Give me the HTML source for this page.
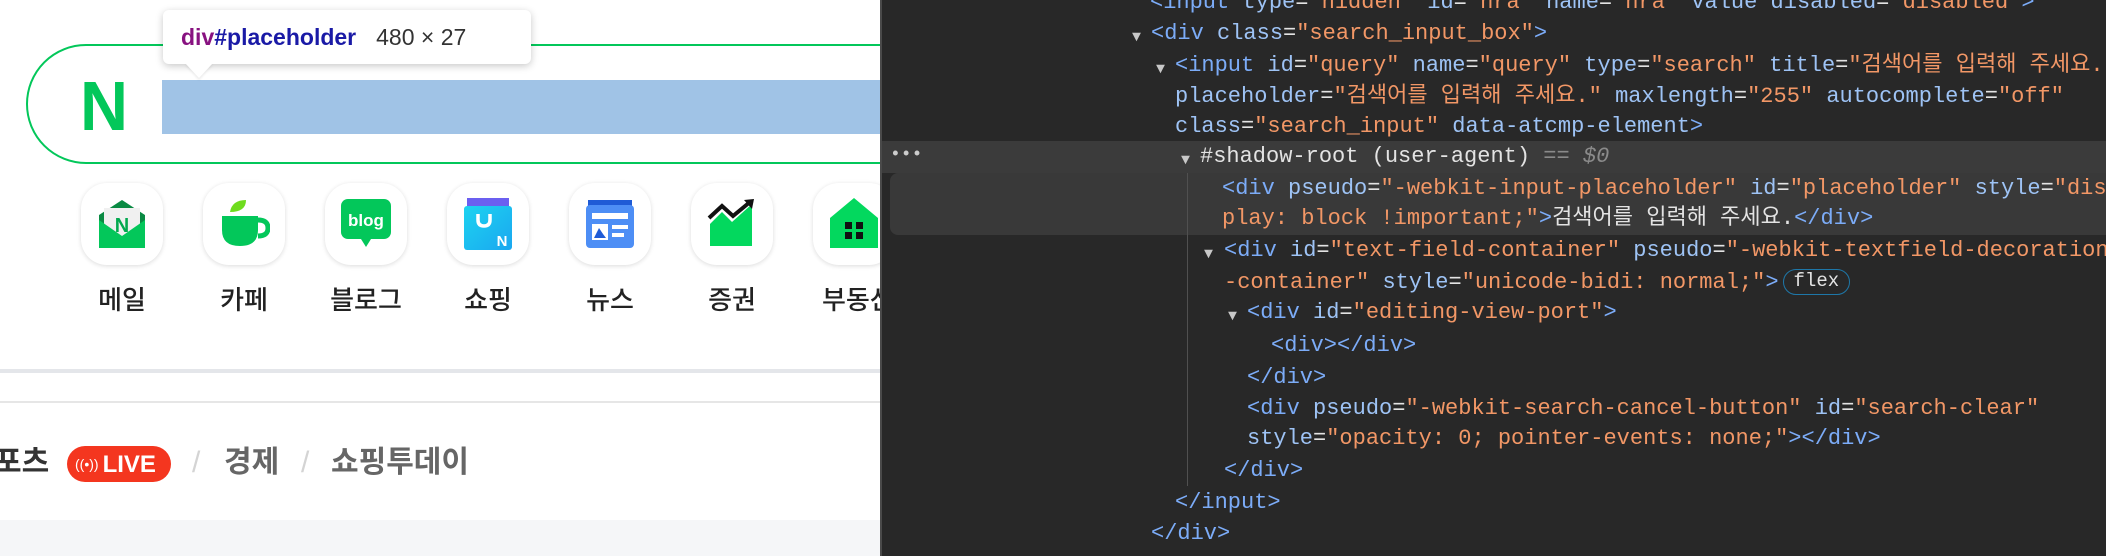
<!DOCTYPE html>
<html><head><meta charset="utf-8"><style>
*{margin:0;padding:0;box-sizing:border-box}
body{width:2106px;height:556px;overflow:hidden;background:#fff;position:relative;font-family:"Liberation Sans","Noto Sans CJK KR",sans-serif}
#left{position:absolute;left:0;top:0;width:880px;height:556px;overflow:hidden;background:#fff}
.sbox{position:absolute;left:26px;top:44px;width:1000px;height:120px;border:2.5px solid #03c75a;border-radius:62px}
.hl{position:absolute;left:162px;top:80px;width:720px;height:54px;background:#a0c3e6}
.nlogo{position:absolute;left:80px;top:64px;font:bold 70px "Liberation Sans",sans-serif;color:#03c75a;line-height:84px;transform:scaleX(0.95);transform-origin:left}
.tip{position:absolute;left:163px;top:10px;width:368px;height:54px;background:#fff;border-radius:6px;box-shadow:0 2px 8px rgba(0,0,0,.22);font-size:23px;line-height:54px;padding-left:18px;white-space:nowrap}
.tip b{color:#881280}.tip b i{font-style:normal;color:#1a1aa6}
.tip span{color:#333;margin-left:20px;font-size:23px}
.arrow{position:absolute;left:185px;top:63px;width:0;height:0;border-left:14px solid transparent;border-right:14px solid transparent;border-top:15px solid #fff;filter:drop-shadow(0 2px 1px rgba(0,0,0,.08))}
.ic{position:absolute;top:183px;width:82px;height:82px;border-radius:26px;background:#fff;box-shadow:0 1px 5px rgba(0,0,0,.14);display:flex;align-items:center;justify-content:center}
.lb{position:absolute;top:280px;width:120px;text-align:center;font-size:26px;color:#222;font-weight:500}
.line1{position:absolute;left:0;top:369px;width:880px;height:4px;background:#e4e6ea}
.line2{position:absolute;left:0;top:401px;width:880px;height:2px;background:#e6e6e6}
.row{position:absolute;top:443px;font-size:30px;font-weight:bold;color:#555;white-space:nowrap;line-height:40px}
.live{position:absolute;left:67px;top:446px;width:104px;height:36px;border-radius:18px;background:#f4361f;color:#fff;font:bold 24px "Liberation Sans",sans-serif;line-height:36px;padding-left:8px;white-space:nowrap}
.live small{font-size:14px;font-weight:normal;vertical-align:3px;margin-right:4px}
.sep{position:absolute;top:446px;font-size:30px;color:#d4d4d4;font-weight:300}
.gray{position:absolute;left:0;top:520px;width:880px;height:36px;background:#f5f6f8}
#dev{position:absolute;left:880px;top:0;width:1226px;height:556px;background:#282828;border-left:2px solid #4a4a4a;overflow:hidden;font:22px/31.2px "Liberation Mono","Noto Sans CJK KR",monospace;color:#e3e3e3}
.l{position:absolute;white-space:pre;height:31.2px}
.t{color:#7cacf8}.a{color:#9ec3f5}.v{color:#f29766}.g{color:#8a8a8a}
.tri{position:absolute;color:#c8c8c8;font-size:15px}
.sel{position:absolute;left:0;top:141px;width:1226px;height:32px;background:#3b3b3b}
.hov{position:absolute;left:8px;top:173px;width:1230px;height:62px;background:#393939;border-radius:8px}
.guide{position:absolute;left:305px;top:173px;width:1px;height:313px;background:#505050}
.flex{display:inline-block;border:1.5px solid #1e77a8;border-radius:14px;height:26px;line-height:22px;padding:0 10px;font-size:19px;color:#e3e3e3;vertical-align:middle;margin-left:4px}
</style></head><body>
<div id="left">
<div class="sbox"></div>
<div class="hl"></div>
<div class="nlogo">N</div>
<div class="tip"><b>div<i>#placeholder</i></b><span>480 × 27</span></div>
<div class="arrow"></div>

<div class="ic" style="left:81px"><svg width="52" height="52" viewBox="0 0 52 52"><path d="M3 17 L26 2 L49 17 V50 H3Z" fill="#0a8a43"/><rect x="8" y="10" width="36" height="30" fill="#f0f0f0"/><text x="26" y="34" font-family="Liberation Sans" font-weight="bold" font-size="20" fill="#03a94f" text-anchor="middle">N</text><path d="M3 22 L26 38 L49 22 V50 H3Z" fill="#03c75a"/></svg></div>
<div class="ic" style="left:203px"><svg width="52" height="52" viewBox="0 0 52 52"><path d="M12 14 Q14 2 28 2 Q28 14 12 14Z" fill="#6fdc1e"/><path d="M4 18 H40 V32 Q40 48 22 48 Q4 48 4 32Z" fill="#03c75a"/><path d="M40 22 Q50 22 50 30 Q50 38 40 38" fill="none" stroke="#03c75a" stroke-width="5"/></svg></div>
<div class="ic" style="left:325px"><svg width="54" height="54" viewBox="0 0 54 54"><rect x="2" y="2" width="50" height="40" rx="7" fill="#03c75a"/><path d="M22 42 L27 50 L32 42Z" fill="#03c75a"/><text x="27" y="29" font-family="Liberation Sans" font-weight="bold" font-size="17" fill="#fff" text-anchor="middle">blog</text></svg></div>
<div class="ic" style="left:447px"><svg width="52" height="56" viewBox="0 0 52 56"><defs><linearGradient id="sg" x1="0" y1="0" x2="1" y2="1"><stop offset="0" stop-color="#1dd3f0"/><stop offset="1" stop-color="#1aa7f0"/></linearGradient></defs><rect x="5" y="2" width="42" height="12" fill="#6b5ff0"/><rect x="2" y="10" width="48" height="44" rx="3" fill="url(#sg)"/><path d="M16 18 V24 Q16 30 22 30 Q28 30 28 24 V18" fill="none" stroke="#fff" stroke-width="3.5"/><text x="40" y="50" font-family="Liberation Sans" font-weight="bold" font-size="15" fill="#fff" text-anchor="middle">N</text></svg></div>
<div class="ic" style="left:569px"><svg width="52" height="52" viewBox="0 0 52 52"><rect x="4" y="2" width="44" height="8" fill="#1f5bd6"/><rect x="2" y="7" width="48" height="43" rx="4" fill="#4d8ef5"/><rect x="8" y="15" width="36" height="6" fill="#fff"/><rect x="8" y="26" width="16" height="16" fill="#fff"/><path d="M10 40 L15 30 L19 36 L22 40Z" fill="#1f5bd6"/><rect x="28" y="27" width="16" height="4" fill="#fff"/><rect x="28" y="35" width="12" height="4" fill="#fff"/></svg></div>
<div class="ic" style="left:691px"><svg width="52" height="52" viewBox="0 0 52 52"><path d="M4 26 L16 14 L26 24 L46 6 V48 H4Z" fill="#03d85e"/><path d="M3 20 L16 8 L27 18 L44 4" fill="none" stroke="#111" stroke-width="4"/><path d="M38 2 L48 1 L46 11Z" fill="#111"/></svg></div>
<div class="ic" style="left:813px"><svg width="52" height="52" viewBox="0 0 52 52"><path d="M2 20 L26 0 L50 20 V50 H2Z" fill="#03d85e"/><rect x="17" y="24" width="7" height="7" fill="#111"/><rect x="28" y="24" width="7" height="7" fill="#111"/><rect x="17" y="34" width="7" height="7" fill="#111"/><rect x="28" y="34" width="7" height="7" fill="#111"/></svg></div>

<div class="lb" style="left:62px">메일</div>
<div class="lb" style="left:184px">카페</div>
<div class="lb" style="left:306px">블로그</div>
<div class="lb" style="left:428px">쇼핑</div>
<div class="lb" style="left:550px">뉴스</div>
<div class="lb" style="left:672px">증권</div>
<div class="lb" style="left:794px;text-align:left;padding-left:28px">부동산</div>

<div class="line1"></div>
<div class="line2"></div>
<div class="row" style="left:-6px;color:#333">포츠</div>
<div class="live"><small>((•))</small>LIVE</div>
<div class="sep" style="left:192px">/</div>
<div class="row" style="left:224px;color:#666">경제</div>
<div class="sep" style="left:301px">/</div>
<div class="row" style="left:331px;color:#666">쇼핑투데이</div>
<div class="gray"></div>
</div>

<div id="dev">
<div class="sel"></div>
<div class="hov"></div>
<div class="guide"></div>
<div class="g" style="position:absolute;left:8px;top:141px;line-height:28px;font-size:18px;color:#ccc">•••</div>
<div class="l" style="left:268px;top:-13px"><span class="t">&lt;input</span> <span class="a">type</span>=<span class="v">"hidden"</span> <span class="a">id</span>=<span class="v">"nra"</span> <span class="a">name</span>=<span class="v">"nra"</span> <span class="a">value disabled</span>=<span class="v">"disabled"</span><span class="t">&gt;</span></div>
<div class="tri" style="left:250px;top:22px">▼</div>
<div class="l" style="left:269px;top:18px"><span class="t">&lt;div</span> <span class="a">class</span>=<span class="v">"search_input_box"</span><span class="t">&gt;</span></div>
<div class="tri" style="left:274px;top:54px">▼</div>
<div class="l" style="left:293px;top:50px"><span class="t">&lt;input</span> <span class="a">id</span>=<span class="v">"query"</span> <span class="a">name</span>=<span class="v">"query"</span> <span class="a">type</span>=<span class="v">"search"</span> <span class="a">title</span>=<span class="v">"검색어를 입력해 주세요."</span></div>
<div class="l" style="left:293px;top:81px"><span class="a">placeholder</span>=<span class="v">"검색어를 입력해 주세요."</span> <span class="a">maxlength</span>=<span class="v">"255"</span> <span class="a">autocomplete</span>=<span class="v">"off"</span></div>
<div class="l" style="left:293px;top:111px"><span class="a">class</span>=<span class="v">"search_input"</span> <span class="a">data-atcmp-element</span><span class="t">&gt;</span></div>
<div class="tri" style="left:299px;top:145px">▼</div>
<div class="l" style="left:318px;top:141px">#shadow-root (user-agent) <span class="g">== <i>$0</i></span></div>
<div class="l" style="left:340px;top:173px"><span class="t">&lt;div</span> <span class="a">pseudo</span>=<span class="v">"-webkit-input-placeholder"</span> <span class="a">id</span>=<span class="v">"placeholder"</span> <span class="a">style</span>=<span class="v">"dis</span></div>
<div class="l" style="left:340px;top:203px"><span class="v">play: block !important;"</span><span class="t">&gt;</span>검색어를 입력해 주세요.<span class="t">&lt;/div&gt;</span></div>
<div class="tri" style="left:322px;top:239px">▼</div>
<div class="l" style="left:342px;top:235px"><span class="t">&lt;div</span> <span class="a">id</span>=<span class="v">"text-field-container"</span> <span class="a">pseudo</span>=<span class="v">"-webkit-textfield-decoration</span></div>
<div class="l" style="left:342px;top:267px"><span class="v">-container"</span> <span class="a">style</span>=<span class="v">"unicode-bidi: normal;"</span><span class="t">&gt;</span><span class="flex">flex</span></div>
<div class="tri" style="left:346px;top:301px">▼</div>
<div class="l" style="left:365px;top:297px"><span class="t">&lt;div</span> <span class="a">id</span>=<span class="v">"editing-view-port"</span><span class="t">&gt;</span></div>
<div class="l" style="left:389px;top:330px"><span class="t">&lt;div&gt;&lt;/div&gt;</span></div>
<div class="l" style="left:365px;top:362px"><span class="t">&lt;/div&gt;</span></div>
<div class="l" style="left:365px;top:393px"><span class="t">&lt;div</span> <span class="a">pseudo</span>=<span class="v">"-webkit-search-cancel-button"</span> <span class="a">id</span>=<span class="v">"search-clear"</span></div>
<div class="l" style="left:365px;top:423px"><span class="a">style</span>=<span class="v">"opacity: 0; pointer-events: none;"</span><span class="t">&gt;&lt;/div&gt;</span></div>
<div class="l" style="left:342px;top:455px"><span class="t">&lt;/div&gt;</span></div>
<div class="l" style="left:293px;top:487px"><span class="t">&lt;/input&gt;</span></div>
<div class="l" style="left:269px;top:518px"><span class="t">&lt;/div&gt;</span></div>
</div>
</body></html>
